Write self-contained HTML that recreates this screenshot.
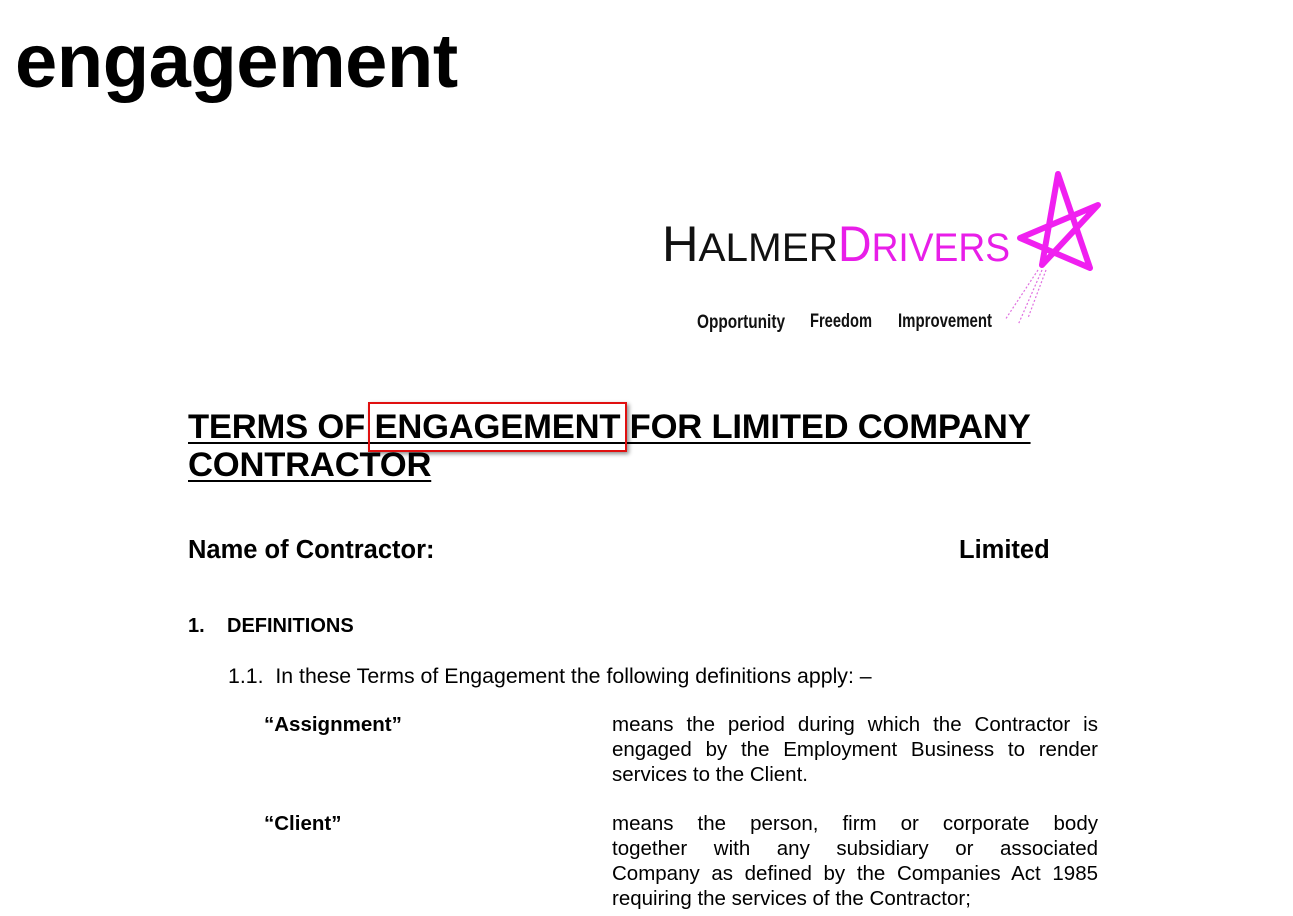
<!DOCTYPE html>
<html><head><meta charset="utf-8"><style>
body{margin:0;width:1293px;height:916px;background:#fff;overflow:hidden;font-family:"Liberation Sans",Arial,sans-serif;color:#000;position:relative}
.a{position:absolute;white-space:nowrap}
h1{position:absolute;left:15px;top:18px;margin:0;font-size:76px;font-weight:bold;font-family:"Liberation Sans",sans-serif;letter-spacing:-0.5px}
.t{font-size:34.6px;font-weight:bold;text-decoration:underline;text-decoration-thickness:2px;text-underline-offset:4px;letter-spacing:-0.2px}
.b{font-size:21.3px}
.j{position:absolute;left:612px;width:486px;font-size:20.5px;line-height:25px}
.j div{text-align:justify;text-align-last:justify;white-space:nowrap}
.j div.l{text-align-last:left}
</style></head><body>
<h1>engagement</h1>
<svg class="a" style="left:650px;top:160px" width="460" height="180">
<text x="12" y="101" font-family="Liberation Sans" font-size="50" fill="#111" textLength="176" lengthAdjust="spacingAndGlyphs">H<tspan font-size="40">ALMER</tspan></text>
<text x="188" y="101" font-family="Liberation Sans" font-size="50" fill="#e81ee8" textLength="172" lengthAdjust="spacingAndGlyphs">D<tspan font-size="40">RIVERS</tspan></text>
<path d="M392 105 L408 14 L440 108 L370 78 L448 45 Z" stroke="#f020f0" stroke-width="6" fill="none" stroke-linejoin="round" stroke-linecap="round"/>
<path d="M388 110 L355 160 M392 110 L368 165 M396 110 L378 158" stroke="#e070e0" stroke-width="1.2" stroke-dasharray="2 2" fill="none"/>
<text x="47" y="168" font-family="Liberation Sans" font-size="19" font-weight="bold" fill="#111" textLength="88" lengthAdjust="spacingAndGlyphs">Opportunity</text>
<text x="160" y="167" font-family="Liberation Sans" font-size="19" font-weight="bold" fill="#111" textLength="62" lengthAdjust="spacingAndGlyphs">Freedom</text>
<text x="248" y="167" font-family="Liberation Sans" font-size="19" font-weight="bold" fill="#111" textLength="94" lengthAdjust="spacingAndGlyphs">Improvement</text>
</svg>
<div class="a t" style="left:188px;top:408px">TERMS OF ENGAGEMENT FOR LIMITED COMPANY</div>
<div class="a t" style="left:188px;top:446px">CONTRACTOR</div>
<div class="a" style="left:368px;top:402px;width:255px;height:46px;border:2px solid #e01010;box-shadow:2px 2px 4px rgba(0,0,0,.45)"></div>
<div class="a" style="left:188px;top:536px;font-size:25.5px;font-weight:bold">Name of Contractor:</div>
<div class="a" style="left:959px;top:536px;font-size:25.5px;font-weight:bold">Limited</div>
<div class="a" style="left:188px;top:615px;font-size:20px;font-weight:bold">1.</div>
<div class="a" style="left:227px;top:615px;font-size:20px;font-weight:bold">DEFINITIONS</div>
<div class="a b" style="left:228px;top:664px">1.1.&nbsp; In these Terms of Engagement the following definitions apply: –</div>
<div class="a" style="left:264px;top:713px;font-size:20.5px;font-weight:bold">“Assignment”</div>
<div class="j" style="top:712px"><div>means the period during which the Contractor is</div><div>engaged by the Employment Business to render</div><div class="l">services to the Client.</div></div>
<div class="a" style="left:264px;top:812px;font-size:20.5px;font-weight:bold">“Client”</div>
<div class="j" style="top:811px"><div>means the person, firm or corporate body</div><div>together with any subsidiary or associated</div><div>Company as defined by the Companies Act 1985</div><div class="l">requiring the services of the Contractor;</div></div>
</body></html>
